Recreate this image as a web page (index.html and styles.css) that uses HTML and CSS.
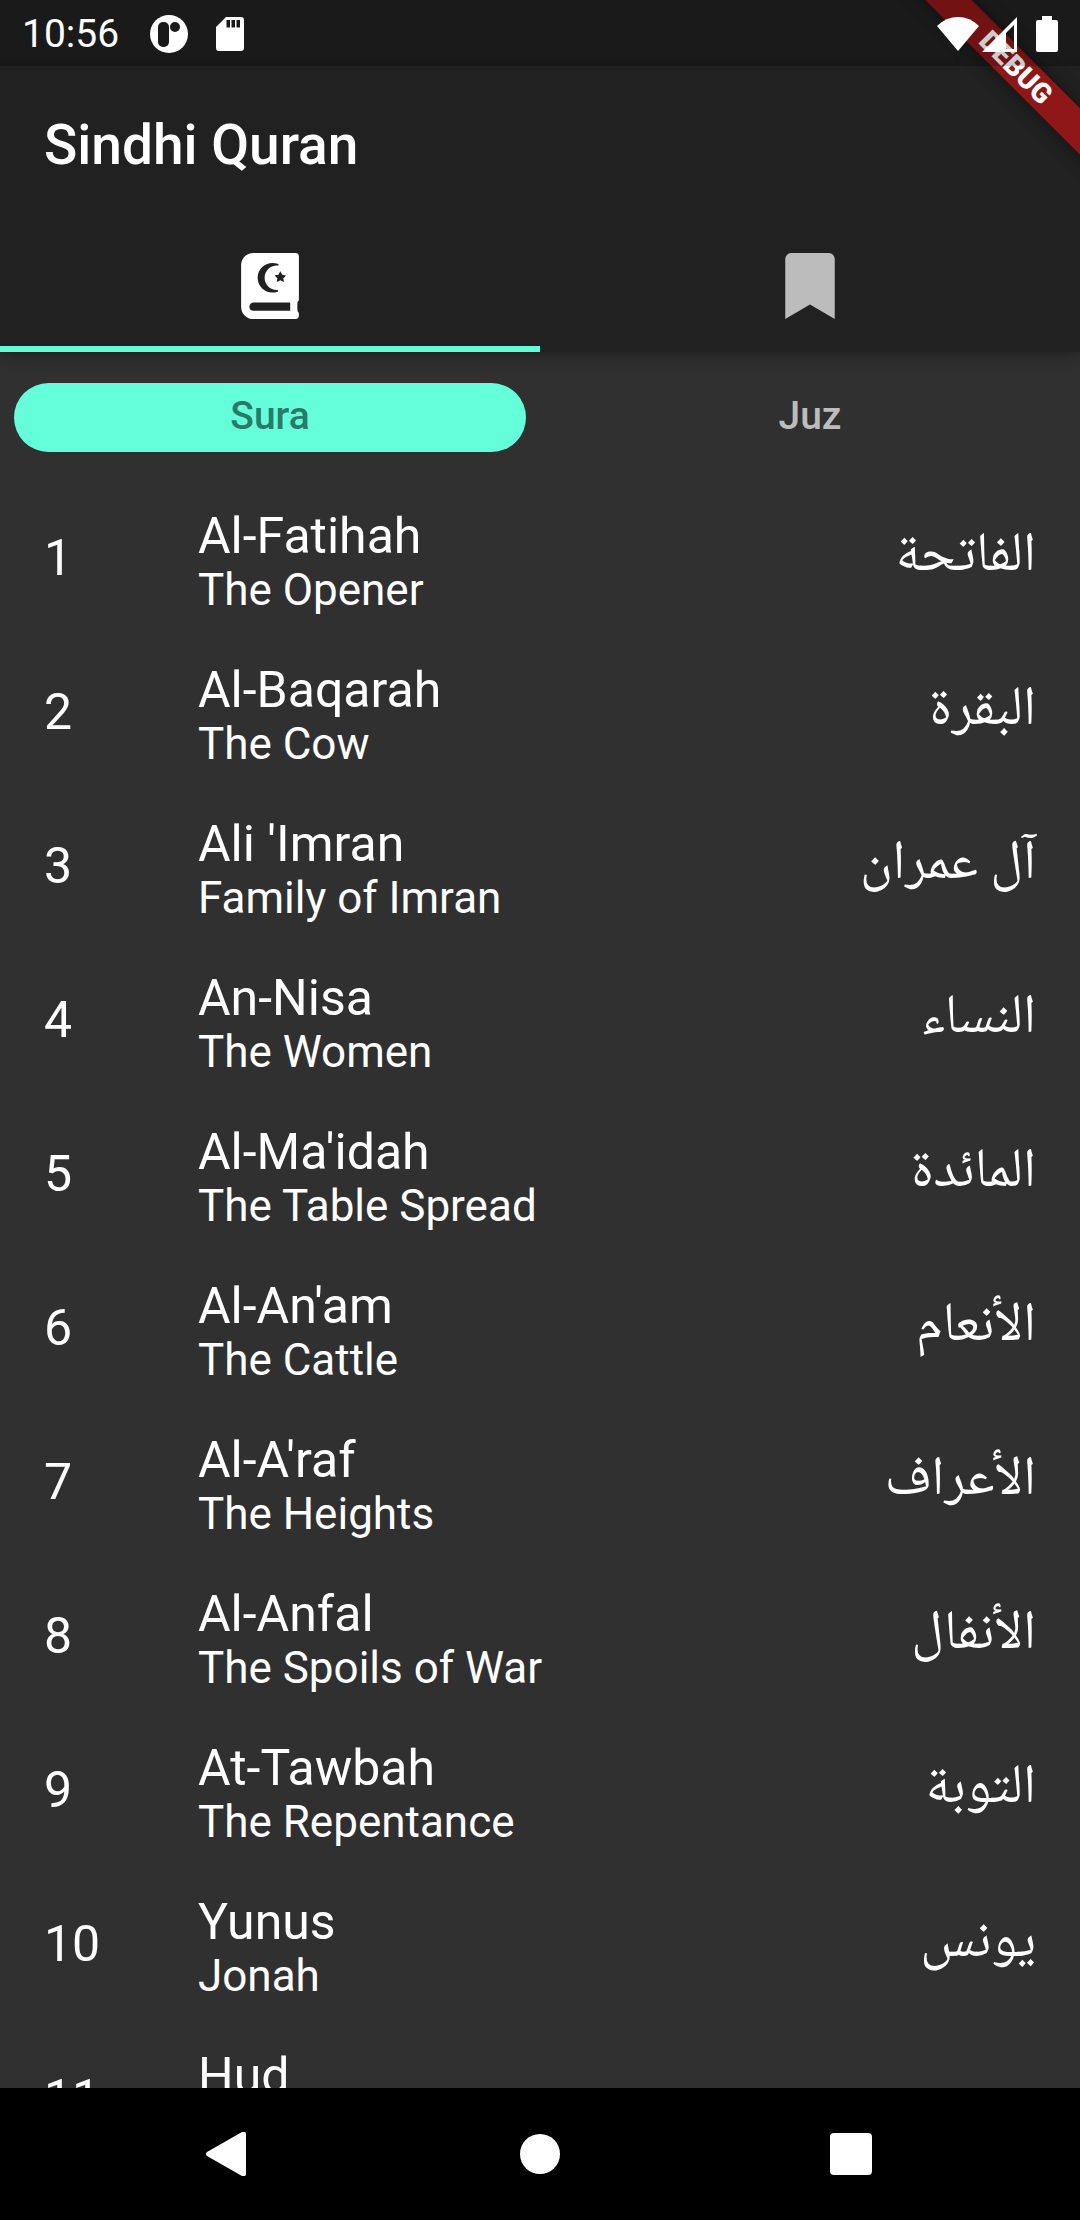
FILE: index.html
```html
<!DOCTYPE html>
<html lang="en">
<head>
<meta charset="utf-8">
<meta name="viewport" content="width=device-width, initial-scale=1">
<title>Sindhi Quran</title>
<link rel="stylesheet" href="styles.css">
</head>
<body>
<div class="app">
  <div class="ribbon-clip"><span class="ribbon">DEBUG</span></div>
  <div class="status">
    <span class="status-time">10:56</span>
    <svg class="status-app" width="38" height="38" viewBox="0 0 38 38"><circle cx="19" cy="19" r="19" fill="#fff"/><rect x="8" y="7" width="11" height="25" rx="5" fill="#1a1a1a"/><circle cx="25" cy="12" r="5" fill="#1a1a1a"/></svg>
    <svg class="status-card" width="28" height="34" viewBox="0 0 28 34"><path fill="#fff" fill-rule="evenodd" d="M10 0h15a3 3 0 0 1 3 3v28a3 3 0 0 1-3 3H3a3 3 0 0 1-3-3V10zM10.500 3v7.500h3.500V3zM15.500 3v7.500h3.500V3zM20.500 3v7.500H24V3z"/></svg>
    <div class="status-right">
      <svg width="42" height="34" viewBox="0 0 42 34"><path fill="#fff" d="M21 34 0 9Q9 0 21 0T42 9z"/></svg>
      <svg width="35" height="35" viewBox="0 0 35 35"><path fill="#fff" fill-rule="evenodd" d="M35 0v35H0zM32 8l-8 8v16h8z"/></svg>
      <svg class="status-battery" width="22" height="36" viewBox="0 0 22 36"><path fill="#fff" d="M6 0h10v4h4a2 2 0 0 1 2 2v28a2 2 0 0 1-2 2H2a2 2 0 0 1-2-2V6a2 2 0 0 1 2-2h4z"/></svg>
    </div>
  </div>
  <header class="header">
    <h1 class="title">Sindhi Quran</h1>
    <nav class="main-tabs">
      <button class="main-tab active" aria-label="Quran">
        <svg width="58" height="66" viewBox="0 0 448 512"><path fill="#fff" d="M448 358.400V25.600c0-16-9.600-25.600-25.600-25.600H96C41.600 0 0 41.600 0 96v320c0 54.400 41.600 96 96 96h326.400c12.800 0 25.600-9.600 25.600-25.600v-16c0-6.400-3.200-12.800-9.600-19.200-3.200-16-3.200-60.800 0-73.600 6.400-3.200 9.600-9.600 9.600-19.200zM301.080 145.820c.6-1.210 1.760-1.820 2.920-1.820s2.320.61 2.920 1.820l11.180 22.650 25 3.630c2.670.39 3.740 3.670 1.810 5.560l-18.090 17.630 4.270 24.890c.36 2.110-1.310 3.820-3.210 3.820-.5 0-1.020-.12-1.520-.38L304 211.870l-22.360 11.750c-.5.26-1.020.38-1.520.38-1.900 0-3.570-1.710-3.210-3.820l4.270-24.890-18.090-17.630c-1.940-1.890-.87-5.170 1.810-5.560l24.990-3.630 11.190-22.650zM243.190 76.810c13.670 0 27.260 2.490 40.380 7.410a6.775 6.775 0 1 1-2.380 13.120c-.67 0-3.090-.21-4.130-.21-52.310 0-94.860 42.550-94.860 94.860 0 52.300 42.550 94.860 94.860 94.860 1.030 0 3.480-.21 4.130-.21 3.930 0 6.800 3.140 6.800 6.780 0 2.980-1.940 5.510-4.620 6.420-13.070 4.870-26.590 7.340-40.190 7.340C179.670 307.190 128 255.510 128 192c0-63.520 51.670-115.190 115.190-115.190zM380.800 448H96c-19.200 0-32-12.800-32-32s16-32 32-32h284.800v64z"/></svg>
      </button>
      <button class="main-tab" aria-label="Bookmarks">
        <svg width="50" height="66" viewBox="0 0 384 512"><path fill="#bcbcbc" d="M0 512V48C0 21.490 21.490 0 48 0h288c26.510 0 48 21.490 48 48v464L192 400 0 512z"/></svg>
      </button>
    </nav>
  </header>
  <nav class="sub-tabs">
    <button class="sub-tab selected">Sura</button>
    <button class="sub-tab">Juz</button>
  </nav>
  <ol class="list">
    <li class="row"><span class="num">1</span><div class="names"><span class="name">Al-Fatihah</span><span class="meaning">The Opener</span></div><span class="arabic" lang="ar" dir="rtl">الفاتحة</span></li>
    <li class="row"><span class="num">2</span><div class="names"><span class="name">Al-Baqarah</span><span class="meaning">The Cow</span></div><span class="arabic" lang="ar" dir="rtl">البقرة</span></li>
    <li class="row"><span class="num">3</span><div class="names"><span class="name">Ali 'Imran</span><span class="meaning">Family of Imran</span></div><span class="arabic" lang="ar" dir="rtl">آل عمران</span></li>
    <li class="row"><span class="num">4</span><div class="names"><span class="name">An-Nisa</span><span class="meaning">The Women</span></div><span class="arabic" lang="ar" dir="rtl">النساء</span></li>
    <li class="row"><span class="num">5</span><div class="names"><span class="name">Al-Ma'idah</span><span class="meaning">The Table Spread</span></div><span class="arabic" lang="ar" dir="rtl">المائدة</span></li>
    <li class="row"><span class="num">6</span><div class="names"><span class="name">Al-An'am</span><span class="meaning">The Cattle</span></div><span class="arabic" lang="ar" dir="rtl">الأنعام</span></li>
    <li class="row"><span class="num">7</span><div class="names"><span class="name">Al-A'raf</span><span class="meaning">The Heights</span></div><span class="arabic" lang="ar" dir="rtl">الأعراف</span></li>
    <li class="row"><span class="num">8</span><div class="names"><span class="name">Al-Anfal</span><span class="meaning">The Spoils of War</span></div><span class="arabic" lang="ar" dir="rtl">الأنفال</span></li>
    <li class="row"><span class="num">9</span><div class="names"><span class="name">At-Tawbah</span><span class="meaning">The Repentance</span></div><span class="arabic" lang="ar" dir="rtl">التوبة</span></li>
    <li class="row"><span class="num">10</span><div class="names"><span class="name">Yunus</span><span class="meaning">Jonah</span></div><span class="arabic" lang="ar" dir="rtl">يونس</span></li>
    <li class="row"><span class="num">11</span><div class="names"><span class="name">Hud</span></div></li>
  </ol>
  <nav class="system-nav">
    <button class="system-button" aria-label="Back"><svg width="48" height="44" viewBox="0 0 48 44"><path fill="#fff" d="M2 20 37 0q4-1 4 2v40q0 3-4 2L2 24q-2-2 0-4z"/></svg></button>
    <button class="system-button" aria-label="Home"><svg width="40" height="40" viewBox="0 0 40 40"><circle cx="20" cy="20" r="20" fill="#fff"/></svg></button>
    <button class="system-button" aria-label="Recent apps"><svg width="42" height="42" viewBox="0 0 42 42"><rect width="42" height="42" rx="4" fill="#fff"/></svg></button>
  </nav>
</div>
</body>
</html>
```
FILE: styles.css
```css
* { box-sizing: border-box; }

body {
  margin: 0;
  background: #303030;
  color: #fff;
  font-family: Roboto, "Liberation Sans", sans-serif;
}

button {
  margin: 0;
  padding: 0;
  border: 0;
  background: none;
  color: inherit;
  font: inherit;
}

svg { display: block; }

.app {
  position: relative;
  display: flex;
  flex-direction: column;
  height: 100vh;
  background: linear-gradient(#212121 66px, #303030 66px);
}

.ribbon-clip {
  position: absolute;
  z-index: 2;
  top: 0;
  right: 0;
  width: 240px;
  height: 240px;
  overflow: hidden;
  pointer-events: none;
}

.ribbon {
  position: absolute;
  top: 51px;
  right: -76px;
  width: 280px;
  background: #901717;
  box-shadow: 0 0 16px rgba(0, 0, 0, 0.5);
  font-size: 28px;
  font-weight: 900;
  line-height: 33px;
  text-align: center;
  transform: rotate(45deg);
}

.status {
  position: relative;
  z-index: 3;
  display: flex;
  align-items: center;
  flex: none;
  height: 66px;
  padding: 2px 22px 0;
  background: rgba(0, 0, 0, 0.2);
}

.status-time {
  font-size: 39px;
  line-height: 46px;
}

.status-app { margin-left: 31px; }
.status-card { margin-left: 28px; }

.status-right {
  display: flex;
  align-items: center;
  gap: 3px;
  margin-left: auto;
}

.status-battery { margin-left: 16px; }

.header {
  position: relative;
  z-index: 1;
  flex: none;
  background: #212121;
  box-shadow: 0 4px 12px rgba(0, 0, 0, 0.3);
}

.title {
  margin: 0;
  padding: 4px 44px 0;
  font-size: 55px;
  font-weight: 500;
  line-height: 150px;
}

.main-tabs, .sub-tabs {
  display: grid;
  grid-template-columns: 1fr 1fr;
}

.main-tab {
  display: flex;
  align-items: center;
  justify-content: center;
  height: 132px;
}

.main-tab.active { box-shadow: inset 0 -6px #64ffda; }

.sub-tabs {
  flex: none;
  padding: 31px 0 29px;
}

.sub-tab {
  height: 69px;
  margin: 0 14px;
  padding-bottom: 4px;
  border-radius: 35px;
  color: #bcbcbc;
  font-size: 39px;
  font-weight: 500;
  line-height: 46px;
}

.sub-tab.selected {
  background: #64ffda;
  color: #297a68;
}

.list {
  flex: 1;
  min-height: 0;
  margin: 0;
  padding: 0;
  overflow: hidden;
  list-style: none;
}

.row {
  display: flex;
  align-items: center;
  height: 154px;
  padding: 0 44px;
}

.num {
  width: 154px;
  font-size: 50px;
  line-height: 58px;
}

.names {
  display: flex;
  flex: 1;
  flex-direction: column;
  height: 102px;
}

.name {
  font-size: 50px;
  line-height: 58px;
}

.meaning {
  font-size: 44px;
  line-height: 50px;
}

.arabic {
  font-family: "Noto Naskh Arabic", "Noto Sans Arabic", "DejaVu Sans", sans-serif;
  font-size: 55px;
  line-height: 58px;
}

.system-nav {
  display: grid;
  flex: none;
  grid-template-columns: repeat(3, 1fr);
  height: 132px;
  padding: 0 74px;
  background: #000;
}

.system-button {
  display: flex;
  align-items: center;
  justify-content: center;
}
```
